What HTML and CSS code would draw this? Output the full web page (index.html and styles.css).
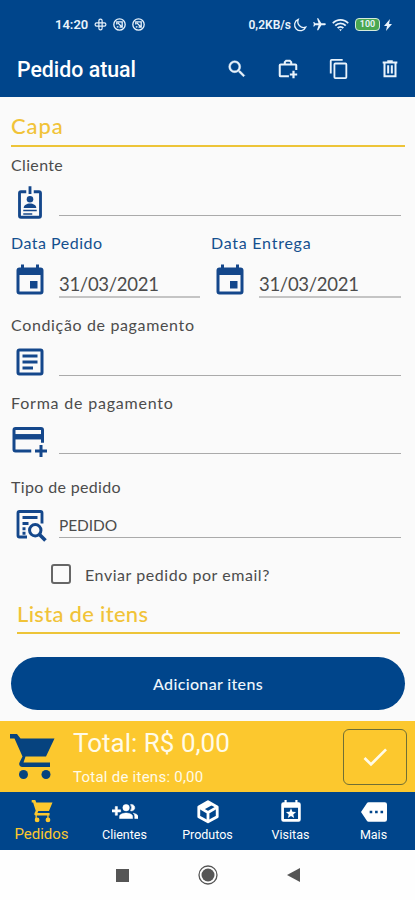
FILE: index.html
```
<!DOCTYPE html>
<html lang="pt-BR">
<head>
    <meta charset="UTF-8">
    <meta name="viewport" content="width=device-width, initial-scale=1.0">
    <title>Pedido atual</title>
    <link rel="stylesheet" href="styles.css">
</head>
<body>
    <header class="header">
        <div class="status-bar">
            <div class="status-left">
                <span class="clock">14:20</span>
                <svg width="13" height="13" viewBox="0 0 24 24" fill="none" stroke="currentColor" stroke-width="2.2"><rect x="9" y="2" width="6" height="20" rx="3"/><rect x="2" y="9" width="20" height="6" rx="3"/></svg>
                <svg width="13" height="13" viewBox="0 0 24 24" fill="none" stroke="currentColor" stroke-width="2.4"><circle cx="12" cy="12" r="10.500"/><path d="M7 12V7h10v10h-5M7 17l3-1M9 9l7 7"/></svg>
                <svg width="13" height="13" viewBox="0 0 24 24" fill="none" stroke="currentColor" stroke-width="2.4"><circle cx="12" cy="12" r="10.500"/><path d="M7 12V7h10v10h-5M7 17l3-1M9 9l7 7"/></svg>
            </div>
            <div class="status-right">
                <span class="speed">0,2KB/s</span>
                <svg class="moon" width="14" height="14" viewBox="0 0 24 24" fill="none" stroke="currentColor" stroke-width="2.2"><path d="M9 2.500a10 10 0 1 0 13 13A10 10 0 0 1 9 2.500z"/></svg>
                <svg class="plane" width="15" height="15" viewBox="0 0 24 24" fill="currentColor"><path transform="rotate(90 12 12)" d="M21 16v-2l-8-5V3.500C13 2.670 12.330 2 11.500 2S10 2.670 10 3.500V9l-8 5v2l8-2.500V19l-2 1.500V22l3.500-1 3.500 1v-1.500L13 19v-5.500z"/></svg>
                <svg class="wifi" width="17" height="14" viewBox="0 0 24 20" fill="none" stroke="currentColor" stroke-width="2.600"><path d="M1 7.500C7 1 17 1 23 7.500M4.500 11c4-4.500 11-4.500 15 0M8 14.500c2-2.500 6-2.500 8 0"/><path d="M10 16h4l-2 3z" fill="currentColor" stroke="none"/></svg>
                <span class="battery">100</span>
                <svg class="bolt" width="8" height="12" viewBox="0 0 8 12" fill="currentColor"><path d="M6 0 0 7h3L2 12l6-7H5z"/></svg>
            </div>
        </div>
        <div class="toolbar">
            <h1>Pedido atual</h1>
            <div class="actions">
                <svg width="22" height="22" viewBox="0 0 24 24" fill="currentColor" stroke="currentColor" stroke-width=".5"><path d="M15.500 14h-.79l-.28-.27A6.470 6.470 0 0 0 16 9.500 6.500 6.500 0 1 0 9.500 16c1.610 0 3.090-.59 4.230-1.570l.27.28v.79l5 4.990L20.490 19zm-6 0a4.500 4.500 0 1 1 0-9 4.500 4.500 0 0 1 0 9z"/></svg>
                <svg width="22" height="22" viewBox="0 0 24 24" fill="none" stroke="currentColor" stroke-width="2.200"><path d="M13 20H4a1 1 0 0 1-1-1V8a1 1 0 0 1 1-1h16a1 1 0 0 1 1 1v5M8.500 7V4.500L10 3h4l1.500 1.500V7"/><path d="M18 14v8M14 18h8" stroke-width="2.400"/></svg>
                <svg width="22" height="22" viewBox="0 0 24 24" fill="currentColor"><path d="M16 1H4a2 2 0 0 0-2 2v14h2V3h12zm3 4H8a2 2 0 0 0-2 2v14a2 2 0 0 0 2 2h11a2 2 0 0 0 2-2V7a2 2 0 0 0-2-2zm0 16H8V7h11z"/></svg>
                <svg width="22" height="22" viewBox="0 0 24 24" fill="none" stroke="currentColor" stroke-width="2.200"><path d="M4 5h16M9 3.500h6M6 6v14h12V6M10 8v9M14 8v9"/></svg>
            </div>
        </div>
    </header>

    <main class="content">
        <h2 class="section-title">Capa</h2>

        <div class="field cliente">
            <label>Cliente</label>
            <div class="row">
                <svg class="icon" viewBox="0 0 24 24" fill="none" stroke="currentColor" stroke-width="1.900"><path d="M9.500 4.500H6a1 1 0 0 0-1 1v15a1 1 0 0 0 1 1h12a1 1 0 0 0 1-1v-15a1 1 0 0 0-1-1h-3.500M12 .8V6"/><circle cx="12" cy="9.500" r="2.200" fill="currentColor" stroke="none"/><path d="M7.800 15.300c0-4 8.400-4 8.400 0z" fill="currentColor" stroke="none"/><path d="M7.500 17h9M7.500 19.300h6" stroke-width="1"/></svg>
                <div class="input"></div>
            </div>
        </div>

        <div class="dates">
            <div class="field date">
                <label>Data Pedido</label>
                <div class="row">
                    <svg class="icon" viewBox="0 0 24 24" fill="currentColor"><path d="M17 12h-5v5h5zM16 1v2H8V1H6v2H5a2 2 0 0 0-2 2v14a2 2 0 0 0 2 2h14a2 2 0 0 0 2-2V5a2 2 0 0 0-2-2h-1V1zm3 18H5V8h14z"/></svg>
                    <div class="input">31/03/2021</div>
                </div>
            </div>
            <div class="field date entrega">
                <label>Data Entrega</label>
                <div class="row">
                    <svg class="icon" viewBox="0 0 24 24" fill="currentColor"><path d="M17 12h-5v5h5zM16 1v2H8V1H6v2H5a2 2 0 0 0-2 2v14a2 2 0 0 0 2 2h14a2 2 0 0 0 2-2V5a2 2 0 0 0-2-2h-1V1zm3 18H5V8h14z"/></svg>
                    <div class="input">31/03/2021</div>
                </div>
            </div>
        </div>

        <div class="field condicao">
            <label>Condição de pagamento</label>
            <div class="row">
                <svg class="icon" viewBox="0 0 24 24" fill="none" stroke="currentColor" stroke-width="2"><rect x="4" y="4" width="16" height="16" rx="1"/><path d="M7 8h10M7 12h10M7 16h7"/></svg>
                <div class="input"></div>
            </div>
        </div>

        <div class="field forma">
            <label>Forma de pagamento</label>
            <div class="row">
                <svg class="icon" viewBox="0 0 24 24" fill="none" stroke="currentColor" stroke-width="2"><path d="M13.500 18H3a1 1 0 0 1-1-1V4a1 1 0 0 1 1-1h17a1 1 0 0 1 1 1v8.500"/><path d="M2 8.500h19" stroke-width="3.600"/><path d="M20 14v8M16 18h8"/></svg>
                <div class="input"></div>
            </div>
        </div>

        <div class="field tipo">
            <label>Tipo de pedido</label>
            <div class="row">
                <svg class="icon" viewBox="0 0 24 24" fill="none" stroke="currentColor" stroke-width="2"><path d="M10 20H5a1 1 0 0 1-1-1V4a1 1 0 0 1 1-1h14a1 1 0 0 1 1 1v7M7 7h10M7 11h4M7 14.500h2M7 17.500h2" stroke-width="1.900"/><circle cx="15.500" cy="15.500" r="3.800"/><path d="m18.300 18.300 4 4" stroke-width="2.400"/></svg>
                <div class="input">PEDIDO</div>
            </div>
        </div>

        <div class="checkbox-row">
            <span class="checkbox"></span>
            <span>Enviar pedido por email?</span>
        </div>

        <h2 class="section-title list-title">Lista de itens</h2>

        <button class="add-btn" type="button">Adicionar itens</button>
    </main>

    <section class="total-bar">
        <svg class="cart" viewBox="0 0 46 46" fill="currentColor"><path d="M0 0h7l3.500 4.500H44.500L36 22.500H15.500L13.500 28.500H40V33H12.500C9 33 8.500 30 10 27.500L12.500 22.500 4.500 4.500H0z"/><circle cx="13.500" cy="40.500" r="4.500"/><circle cx="36" cy="40.500" r="4.500"/></svg>
        <div class="totals">
            <div class="total">Total: R$ 0,00</div>
            <div class="total-items">Total de itens: 0,00</div>
        </div>
        <button class="confirm-btn" type="button">
            <svg width="32" height="32" viewBox="0 0 24 24" fill="currentColor"><path d="M9 16.170 4.830 12l-1.420 1.410L9 19 21 7l-1.410-1.410z"/></svg>
        </button>
    </section>

    <nav class="bottom-nav">
        <a class="active">
            <svg width="26" height="26" viewBox="0 0 24 24" fill="currentColor"><path d="M2.500 1h3.300l.9 2.300H21.700L18.400 11H8.600l-.8 2H19v2.300H6.500c-1.500 0-1.900-1.200-1.300-2.300l1-2.200L3.800 3.300H2.500z"/><path d="M6.600 14v5M17.500 14v5" stroke="currentColor" stroke-width="1.200"/><circle cx="7.500" cy="19.300" r="2.200"/><circle cx="17.500" cy="19.300" r="2.200"/></svg>
            <span>Pedidos</span>
        </a>
        <a>
            <svg width="26" height="26" viewBox="0 0 24 24" fill="currentColor"><path d="M8 10H5V7H3v3H0v2h3v3h2v-3h3zm10 1a3 3 0 1 0-.9-5.860 5 5 0 0 1 0 5.720c.28.090.58.140.9.140zm-5 0a3 3 0 1 0 0-6 3 3 0 0 0 0 6zm6.620 2.160A3.600 3.600 0 0 1 21 16v2h3v-2c0-1.540-2.370-2.490-4.380-2.840zM13 13c-2 0-6 1-6 3v2h12v-2c0-2-4-3-6-3z" stroke="currentColor" stroke-width=".5"/></svg>
            <span>Clientes</span>
        </a>
        <a>
            <svg width="26" height="26" viewBox="0 0 24 24" fill="none" stroke="currentColor" stroke-width="2.600" stroke-linejoin="round"><path d="m12 2.500 8.500 4.800v9L12 21l-8.500-4.700v-9z"/><path d="m3.500 7.500 8.500 5 8.500-5M12 12.500V21"/><path d="m12 3 4 2.500-8 4.500-4-2.500z" fill="currentColor" stroke="none"/></svg>
            <span>Produtos</span>
        </a>
        <a>
            <svg width="26" height="26" viewBox="0 0 24 24" fill="currentColor"><path fill-rule="evenodd" d="M16 1v2H8V1H6v2H5a2 2 0 0 0-2 2v14a2 2 0 0 0 2 2h14a2 2 0 0 0 2-2V5a2 2 0 0 0-2-2h-1V1zM5.500 8h13v10.500h-13z"/><path d="m12 8.600 1.300 3.100 3.400.3-2.600 2.200.8 3.300-2.900-1.800-2.900 1.800.8-3.300L7.300 12l3.400-.3z"/></svg>
            <span>Visitas</span>
        </a>
        <a>
            <svg width="26" height="26" viewBox="0 0 24 24" fill="currentColor"><path fill-rule="evenodd" d="M22 3H7c-.69 0-1.230.35-1.590.88L0 12l5.410 8.110c.36.53.9.890 1.590.890h15a2 2 0 0 0 2-2V5a2 2 0 0 0-2-2zM8 10.800h2.400v2.400H8zm5 0h2.400v2.400H13zm5 0h2.400v2.400H18z"/></svg>
            <span>Mais</span>
        </a>
    </nav>

    <footer class="system-nav">
        <svg width="13" height="13" viewBox="0 0 13 13"><path d="M0 0h13v13H0z" fill="currentColor"/></svg>
        <svg width="20" height="20" viewBox="0 0 20 20"><circle cx="10" cy="10" r="9" fill="none" stroke="currentColor" stroke-width="1.300"/><circle cx="10" cy="10" r="6.500" fill="currentColor"/></svg>
        <svg width="13" height="14" viewBox="0 0 13 14"><path d="M13 0v14L0 7z" fill="currentColor"/></svg>
    </footer>
</body>
</html>
```
FILE: styles.css
```
* {
    box-sizing: border-box;
}
body {
    font-family: Lato, "Open Sans", sans-serif;
    margin: 0;
    background-color: #fafafa;
    color: #4c4c4c;
}
svg {
    display: block;
    flex: none;
}
h1, h2 {
    margin: 0;
}
button {
    font-family: inherit;
    padding: 0;
    cursor: pointer;
}

/* Header */
.header {
    height: 97px;
    background-color: #00458b;
    color: #e9f3fc;
    font-family: Roboto, sans-serif;
}
.status-bar {
    height: 49px;
    padding: 0 23px 0 55px;
    display: flex;
    align-items: center;
    justify-content: space-between;
    font-size: 13px;
    font-weight: 600;
}
.status-left, .status-right {
    display: flex;
    align-items: center;
}
.status-left {
    gap: 6px;
}
.speed {
    font-size: 12px;
}
.moon {
    margin-left: 2px;
}
.plane {
    margin-left: 5px;
}
.wifi {
    margin-left: 5px;
}
.battery {
    width: 25px;
    height: 13px;
    margin-left: 6px;
    border: 1.5px solid #d4eadb;
    border-radius: 4px;
    background-color: #4aa751;
    font-size: 9px;
    line-height: 11px;
    text-align: center;
}
.bolt {
    margin-left: 4px;
}
.toolbar {
    height: 40px;
    padding: 0 14px 0 17px;
    display: flex;
    align-items: center;
    justify-content: space-between;
}
.toolbar h1 {
    font-size: 21.3px;
    font-weight: 500;
    color: #fff;
}
.actions {
    display: flex;
    align-items: center;
    gap: 29px;
}

/* Form */
.content {
    height: 624px;
    overflow: hidden;
}
.section-title {
    height: 50px;
    margin: 0 10px 0 11px;
    padding-top: 15px;
    border-bottom: 2px solid #edc438;
    color: #f1c338;
    font-size: 22px;
    line-height: 28px;
    font-weight: 500;
    letter-spacing: 0.9px;
}
.field {
    margin: 16px 14px 0 11px;
}
.field label {
    display: block;
    height: 22px;
    line-height: 22px;
    font-size: 16px;
    letter-spacing: 0.35px;
}
.row {
    height: 40px;
    display: flex;
    align-items: flex-end;
}
.icon {
    width: 36px;
    height: 36px;
    margin: 0 11px -5px 1px;
    color: #14478b;
}
.input {
    flex: 1;
    height: 26px;
    line-height: 26px;
    border-bottom: 1.5px solid #aaa;
    font-size: 15.5px;
    letter-spacing: -0.1px;
}
.cliente {
    margin-top: 7px;
}
.dates {
    display: flex;
    gap: 11px;
    margin-left: 11px;
}
.date {
    width: 189px;
    margin: 16px 0 0;
}
.entrega {
    width: 190px;
}
.date label {
    color: #14508f;
    letter-spacing: 0.5px;
}
.entrega label {
    letter-spacing: 0.75px;
}
.date .row {
    height: 44px;
}
.date .icon {
    margin-bottom: -1px;
}
.date .input {
    height: 27px;
    font-size: 18.5px;
    letter-spacing: -0.3px;
    border-bottom: 2px solid #c4c4c4;
}
.condicao label {
    letter-spacing: 0.65px;
}
.condicao .icon {
    margin-bottom: -4px;
}
.forma label {
    letter-spacing: 0.8px;
}
.forma .icon {
    margin: 0 12px -6px 0;
}
.tipo {
    margin-top: 22px;
}
.checkbox-row {
    margin: 25px 0 0 51px;
    height: 22px;
    display: flex;
    align-items: center;
    gap: 14px;
    font-size: 16px;
    letter-spacing: 0.55px;
}
.checkbox {
    width: 20px;
    height: 20px;
    border: 2px solid #666;
    border-radius: 3px;
}
.list-title {
    height: 49px;
    margin: 0 15px 0 17px;
    padding-top: 15px;
    letter-spacing: 0.3px;
}
.add-btn {
    display: block;
    width: 394px;
    height: 53px;
    margin: 23px 0 0 11px;
    border: none;
    border-radius: 27px;
    background-color: #00458b;
    color: #eef6fc;
    font-size: 16px;
    font-weight: 500;
    letter-spacing: 0.35px;
}

/* Total */
.total-bar {
    height: 71px;
    padding: 0 8px 0 10px;
    display: flex;
    align-items: center;
    background-color: #fcc82e;
    color: #fffbe8;
    font-family: Roboto, sans-serif;
}
.cart {
    width: 46px;
    height: 46px;
    color: #06437f;
}
.totals {
    flex: 1;
    margin-left: 17px;
    padding-top: 4px;
}
.total {
    font-size: 26px;
    line-height: 36px;
}
.total-items {
    font-size: 15px;
    line-height: 32px;
    letter-spacing: 0.25px;
}
.confirm-btn {
    width: 64px;
    height: 56px;
    display: flex;
    align-items: center;
    justify-content: center;
    border: 1.5px solid #706f35;
    border-radius: 6px;
    background: none;
    color: #fffbe8;
}

/* Navigation */
.bottom-nav {
    height: 58px;
    display: grid;
    grid-template-columns: repeat(5, 1fr);
    background-color: #00458b;
    color: #fff;
    font-family: Roboto, sans-serif;
    font-size: 12.5px;
}
.bottom-nav a {
    display: flex;
    flex-direction: column;
    align-items: center;
    padding-top: 7px;
}
.bottom-nav span {
    line-height: 20px;
}
.bottom-nav .active {
    color: #fcc82e;
}
.active span {
    font-size: 15px;
    line-height: 19px;
}
.system-nav {
    height: 50px;
    display: flex;
    align-items: center;
    justify-content: center;
    gap: 69px;
    background-color: #fefefe;
    color: #555;
}
```
